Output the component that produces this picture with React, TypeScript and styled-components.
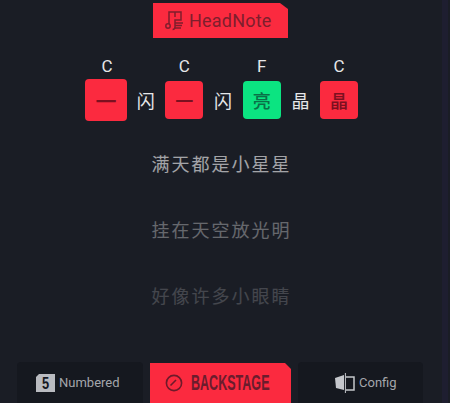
import React from "react";
import styled, { createGlobalStyle } from "styled-components";

const Global = createGlobalStyle`
  html, body { margin: 0; padding: 0; background: #1a1d25; }
  body { width: 450px; height: 403px; overflow: hidden; font-family: Roboto, "Noto Sans CJK SC", sans-serif; }
`;

const Shell = styled.div`
  width: 450px;
  height: 403px;
  display: flex;
`;

const Page = styled.div`
  width: 441px;
  height: 403px;
  flex: none;
  display: flex;
  flex-direction: column;
  align-items: center;
  overflow: hidden;
`;

const Track = styled.div`
  width: 6px;
  margin-left: 1px;
  height: 403px;
  background: #1e1e30;
`;

const Logo = styled.div`
  margin-top: 3px;
  width: 135px;
  height: 35px;
  flex: none;
  box-sizing: border-box;
  background: #fb2a3f;
  clip-path: polygon(0 0, 127px 0, 135px 6px, 135px 100%, 0 100%);
  display: flex;
  align-items: center;
  padding-left: 12px;
  gap: 6px;
  color: #7f1e2d;
  font-family: Roboto, sans-serif;
  font-size: 18px;
  letter-spacing: 0.2px;
`;

const ChordRow = styled.div`
  margin: 18px 0 0 5px;
  display: flex;
  flex: none;
`;

const Slot = styled.div`
  width: 38.7px;
  display: flex;
  flex-direction: column;
  align-items: center;
`;

const ChordName = styled.div`
  height: 20px;
  line-height: 20px;
  color: #e6e7e9;
  font-size: 17px;
`;

const Cell = styled.div<{ $tone?: "red" | "green"; $big?: boolean }>`
  width: ${(p) => (p.$big ? 42 : 38)}px;
  height: ${(p) => (p.$big ? 42 : 38)}px;
  margin: ${(p) => (p.$big ? "3px -1px 0 -3px" : "5px 0 0")};
  border-radius: 4px;
  display: flex;
  align-items: center;
  justify-content: center;
  font-family: "Noto Sans CJK SC", sans-serif;
  font-size: ${(p) => (p.$big ? 21 : 18)}px;
  font-weight: ${(p) => (p.$tone ? 500 : 400)};
  background: ${(p) => (p.$tone === "red" ? "#fb2a3f" : p.$tone === "green" ? "#0be481" : "transparent")};
  color: ${(p) => (p.$tone === "red" ? "#7c1020" : p.$tone === "green" ? "#0a6f48" : "#e6e7e9")};
`;

const Lyrics = styled.div`
  margin-top: 29px;
  padding-left: 2px;
  flex: 1;
  min-height: 0;
  display: flex;
  flex-direction: column;
  align-items: center;
  gap: 40px;
`;

const LyricLine = styled.div<{ $level: number }>`
  flex: none;
  height: 26px;
  line-height: 26px;
  font-family: "Noto Sans CJK SC", sans-serif;
  font-size: 18px;
  letter-spacing: 2px;
  color: #ffffff;
  opacity: ${(p) => p.$level};
`;

const TabBar = styled.nav`
  flex: none;
  align-self: stretch;
  margin: 0 18px 0 17px;
  height: 41px;
  display: grid;
  grid-template-columns: 126px 141px 125px;
  justify-content: space-between;
  align-items: end;
`;

const Tab = styled.div<{ $pad: number }>`
  height: 41px;
  box-sizing: border-box;
  padding-left: ${(p) => p.$pad}px;
  background: #15181f;
  border-radius: 4px 4px 0 0;
  display: flex;
  align-items: center;
  gap: 4px;
  color: #a4a6ab;
  font-size: 13px;
  font-weight: 400;
`;

const ActiveTab = styled.div`
  height: 40px;
  box-sizing: border-box;
  background: #fb2a3f;
  clip-path: polygon(0 0, 135px 0, 141px 6px, 141px 100%, 0 100%);
  display: flex;
  align-items: center;
  padding-left: 15px;
  gap: 8px;
  color: #6b1c2d;
  font-family: "Liberation Sans", sans-serif;
  font-weight: 700;
  font-size: 22px;
  overflow: hidden;
`;

const Condensed = styled.span`
  display: inline-block;
  flex: none;
  transform: scaleX(0.57);
  transform-origin: left center;
  white-space: nowrap;
`;

const IconSvg = styled.svg`
  flex: none;
`;

const LogoIcon = () => (
  <IconSvg width="18" height="20" viewBox="0 0 18 20" fill="none" stroke="#7f1e2d" strokeWidth="1.5">
    <path d="M4 13V1h12v8h-6v7a2.4 2.4 0 0 1-2.4 2.4" />
    <path d="M10 1v5M10 12h8M10 14.5h7M10 17h6" />
    <circle cx="3" cy="15" r="2.2" />
  </IconSvg>
);

const Dial = () => (
  <IconSvg width="18" height="18" viewBox="0 0 18 18" fill="none" stroke="#6e1a2a" strokeWidth="1.6">
    <circle cx="9" cy="9" r="7.6" />
    <path d="M5.5 11.5 11 6" />
  </IconSvg>
);

const NumberedIcon = () => (
  <IconSvg width="19" height="18" viewBox="0 0 19 18">
    <path d="M3 0h16v18H0V3z" fill="#b9bbc0" />
    <text x="11.9" y="15" textAnchor="middle" transform="scale(0.8 1)" fontFamily="Liberation Sans" fontWeight="700" fontSize="16" fill="#15181f">5</text>
  </IconSvg>
);

const ConfigIcon = () => (
  <IconSvg width="20" height="20" viewBox="0 0 20 20">
    <path d="M0 5 9 2v15L1 15z" fill="#c5c7cc" />
    <path d="M11 4h8v13h-8" fill="none" stroke="#c5c7cc" strokeWidth="1.5" />
    <path d="M10.4 0v20" stroke="#c5c7cc" strokeWidth="1" />
  </IconSvg>
);

export default function App() {
  return (
    <Shell>
      <Global />
      <Page>
        <Logo>
          <LogoIcon />
          <span>HeadNote</span>
        </Logo>
        <ChordRow>
          <Slot><ChordName>C</ChordName><Cell $tone="red" $big>一</Cell></Slot>
          <Slot><ChordName /><Cell>闪</Cell></Slot>
          <Slot><ChordName>C</ChordName><Cell $tone="red">一</Cell></Slot>
          <Slot><ChordName /><Cell>闪</Cell></Slot>
          <Slot><ChordName>F</ChordName><Cell $tone="green">亮</Cell></Slot>
          <Slot><ChordName /><Cell>晶</Cell></Slot>
          <Slot><ChordName>C</ChordName><Cell $tone="red">晶</Cell></Slot>
        </ChordRow>
        <Lyrics>
          <LyricLine $level={0.6}>满天都是小星星</LyricLine>
          <LyricLine $level={0.33}>挂在天空放光明</LyricLine>
          <LyricLine $level={0.18}>好像许多小眼睛</LyricLine>
        </Lyrics>
        <TabBar>
          <Tab $pad={19}><NumberedIcon />Numbered</Tab>
          <ActiveTab><Dial /><Condensed>BACKSTAGE</Condensed></ActiveTab>
          <Tab $pad={37}><ConfigIcon />Config</Tab>
        </TabBar>
      </Page>
      <Track />
    </Shell>
  );
}
